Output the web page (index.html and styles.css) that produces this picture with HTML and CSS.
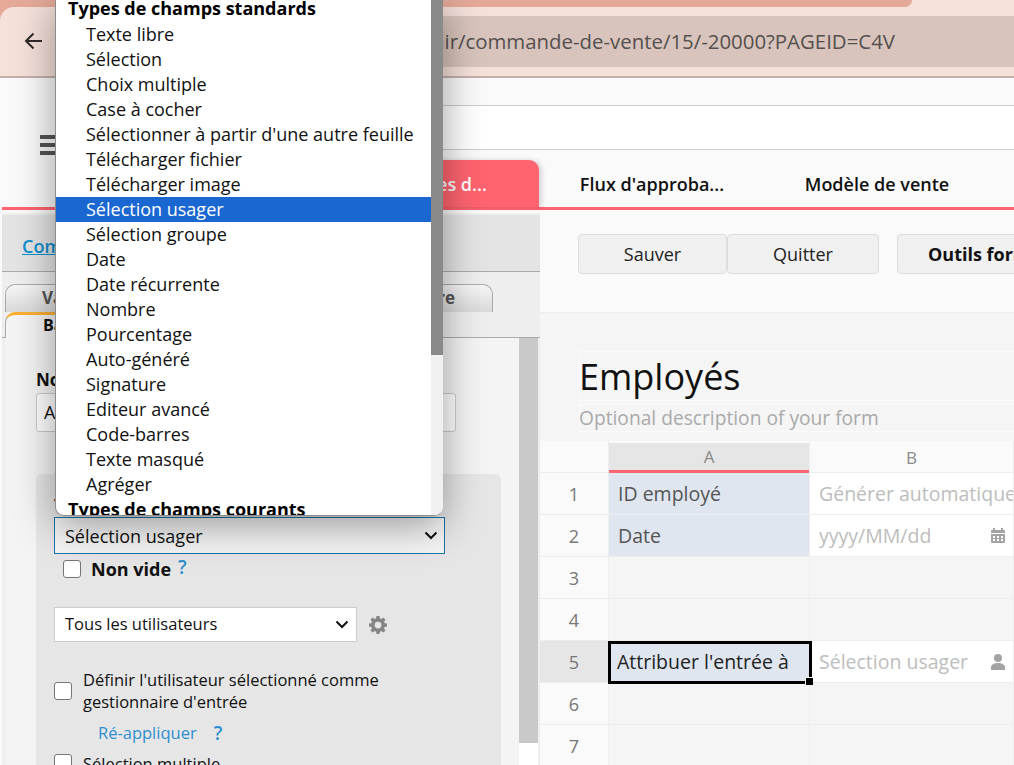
FILE: index.html
```html
<!DOCTYPE html>
<html lang="fr">
<head>
<meta charset="utf-8">
<title>Employés</title>
<link rel="stylesheet" href="styles.css">
</head>
<body>
<header class="chrome">
  <div class="strip"></div>
  <div class="toolbar">
    <svg class="back" width="18" height="18" viewBox="0 0 18 18"><path d="M18 9H2M9.500 1.500 2 9l7.500 7.500" fill="none" stroke="#2f2b2a" stroke-width="2"/></svg>
    <div class="url">nir/commande-de-vente/15/-20000?PAGEID=C4V</div>
  </div>
</header>

<div class="apphead">
  <div class="menu-cell"><div class="burger"><i></i><i></i><i></i></div></div>
  <div class="head-main">
    <div class="head-top"></div>
    <div class="head-white"></div>
    <nav class="tabs">
      <div class="tab active">Règles des d...</div>
      <div class="tab">Flux d'approba...</div>
      <div class="tab tab-last">Modèle de vente</div>
    </nav>
  </div>
</div>
<div class="redline"></div>

<main class="work">
  <aside class="panel">
    <div class="panel-head"><a class="crumb">Commande de vente</a></div>
    <div class="panel-tabs">
      <div class="ptab-row">
        <div class="ptab ptab-a">Valeur</div>
        <div class="ptab ptab-b">Structure</div>
      </div>
      <div class="ptab-on">Base</div>
    </div>
    <div class="panel-body">
      <div class="props">
        <label class="lbl">Nom</label>
        <div class="input">Attribuer l'entrée à</div>
        <section class="box">
          <div class="lbl">Type de champ</div>
          <div class="select sel-focus"><span>Sélection usager</span>
            <svg width="14" height="9" viewBox="0 0 14 9"><path d="M1.500 1.500 7 7l5.500-5.500" fill="none" stroke="#111" stroke-width="2"/></svg>
          </div>
          <div class="check-row nonvide">
            <span class="cb"></span><b>Non vide</b><span class="q">?</span>
          </div>
          <div class="sel-row">
            <div class="select sel-users"><span>Tous les utilisateurs</span>
              <svg width="14" height="9" viewBox="0 0 14 9"><path d="M1.500 1.500 7 7l5.500-5.500" fill="none" stroke="#111" stroke-width="2"/></svg>
            </div>
            <svg class="gear" width="18" height="18" viewBox="0 0 24 24"><path fill="#858585" d="M10 1h4l.6 3.200 1.900.8L19.200 3.100 22 6l-1.900 2.600.8 1.900 3.100.5v4l-3.100.6-.8 1.900 1.900 2.700L19.200 23l-2.700-1.900-1.900.8L14 25h-4l-.6-3.100-1.900-.8L4.800 23 2 20.300l1.900-2.700-.8-1.900L0 15v-4l3.100-.5.800-1.900L2 6l2.800-2.900L7.500 5l1.900-.8zM12 8.500a4.500 4.500 0 1 0 0 9 4.500 4.500 0 0 0 0-9z" transform="translate(0 -1)"/></svg>
          </div>
          <div class="check-row define">
            <span class="cb"></span>
            <span class="define-text">Définir l'utilisateur sélectionné comme gestionnaire d'entrée</span>
          </div>
          <div class="reapply"><a>Ré-appliquer</a><span class="q">?</span></div>
          <div class="check-row multi"><span class="cb"></span><span>Sélection multiple</span></div>
        </section>
      </div>
      <div class="scroll-col"><div class="scroll-bar"></div></div>
    </div>
  </aside>

  <section class="editor">
    <div class="actions">
      <button class="btn btn-save">Sauver</button>
      <button class="btn btn-quit">Quitter</button>
      <button class="btn btn-tools">Outils formulaire</button>
    </div>
    <div class="form-head">
      <div class="form-title">Employés</div>
      <div class="form-desc">Optional description of your form</div>
    </div>
    <div class="sheet">
      <div class="corner"></div><div class="col col-a">A</div><div class="col">B</div>

      <div class="num">1</div><div class="c lab">ID employé</div><div class="c val ph">Générer automatique</div>
      <div class="num">2</div><div class="c lab">Date</div>
      <div class="c val ph between">yyyy/MM/dd
        <svg width="14" height="15" viewBox="0 0 14 15"><path fill="#a3a3a3" d="M2 0h2v2h6V0h2v2h1a1 1 0 0 1 1 1v2H0V3a1 1 0 0 1 1-1h1zM0 6h14v8a1 1 0 0 1-1 1H1a1 1 0 0 1-1-1zm2 2v2h2V8zm4 0v2h2V8zm4 0v2h2V8zm-8 3v2h2v-2zm4 0v2h2v-2zm4 0v2h2v-2z"/></svg>
      </div>
      <div class="num">3</div><div class="c"></div><div class="c"></div>
      <div class="num">4</div><div class="c"></div><div class="c"></div>
      <div class="num num-on">5</div>
      <div class="c lab lab-on">Attribuer l'entrée à<span class="frame"></span><span class="handle"></span></div>
      <div class="c val ph between">Sélection usager
        <svg width="14" height="16" viewBox="0 0 14 16"><circle cx="7" cy="4" r="4" fill="#a3a3a3"/><path fill="#a3a3a3" d="M0 16v-2.500C0 10.500 3 9 7 9s7 1.500 7 4.500V16z"/></svg>
      </div>
      <div class="num">6</div><div class="c"></div><div class="c"></div>
      <div class="num">7</div><div class="c"></div><div class="c"></div>
    </div>
  </section>
</main>

<div class="popup">
  <div class="pop-list">
    <div class="grp grp-first">Types de champs standards</div>
    <div class="opt">Texte libre</div>
    <div class="opt">Sélection</div>
    <div class="opt">Choix multiple</div>
    <div class="opt">Case à cocher</div>
    <div class="opt">Sélectionner à partir d'une autre feuille</div>
    <div class="opt">Télécharger fichier</div>
    <div class="opt">Télécharger image</div>
    <div class="opt opt-on">Sélection usager</div>
    <div class="opt">Sélection groupe</div>
    <div class="opt">Date</div>
    <div class="opt">Date récurrente</div>
    <div class="opt">Nombre</div>
    <div class="opt">Pourcentage</div>
    <div class="opt">Auto-généré</div>
    <div class="opt">Signature</div>
    <div class="opt">Editeur avancé</div>
    <div class="opt">Code-barres</div>
    <div class="opt">Texte masqué</div>
    <div class="opt">Agréger</div>
    <div class="grp">Types de champs courants</div>
  </div>
  <div class="pop-track"><div class="pop-thumb"></div></div>
</div>
</body>
</html>
```
FILE: styles.css
```css
* { box-sizing: border-box; }
html, body { margin: 0; height: 765px; overflow: hidden; }
body { position: relative; background: #fafafa; font-family: "Open Sans", "Liberation Sans", sans-serif; color: #111; }

/* browser chrome */
.chrome { height: 78px; background: linear-gradient(to right, #e5a998 100px, #f5e0da 100px); border-bottom: 2px solid #c4b0aa; }
.strip { width: 912px; height: 7px; background: #e5a998; border-bottom-right-radius: 10px; }
.toolbar { height: 69px; background: #f5e0da; border-top-left-radius: 14px; display: flex; align-items: center; padding: 9px 0 9px 24px; gap: 18px; }
.back { flex: none; margin-top: -1px; }
.url { flex: 1; height: 51px; line-height: 51px; background: #d8c4bc; color: #55504e; font-size: 20.4px; padding-left: 372px; white-space: nowrap; overflow: hidden; }

/* app header */
.apphead { display: flex; height: 129px; background: #fafafa; }
.menu-cell { width: 60px; padding: 57px 0 0 40px; }
.burger { width: 20px; display: flex; flex-direction: column; gap: 4px; }
.burger i { display: block; height: 4px; background: #555; }
.head-main { flex: 1; display: flex; flex-direction: column; }
.head-top { height: 28px; border-bottom: 1px solid #ccc; }
.head-white { height: 44px; background: #fff; border-bottom: 1px solid #ccc; }
.tabs { flex: 1; display: flex; align-items: flex-end; padding-left: 253px; }
.tab { width: 226px; height: 47px; line-height: 49px; text-align: center; font-size: 18px; font-weight: 600; color: #111; }
.tab-last { padding-right: 2px; }
.tab.active { background: #ff6470; color: #fff; border-top-right-radius: 10px; border-top-left-radius: 10px; box-shadow: 3px 0 5px rgba(0,0,0,.15); }
.redline { height: 3px; margin-left: 2px; background: #ff6470; }

/* layout */
.work { display: flex; height: 555px; }
.panel { width: 540px; margin: 3px 0 0 0; padding-left: 2px; display: flex; flex-direction: column; }
.panel-head { height: 59px; padding: 2px 0 0; border-bottom: 1px solid #aaa; background: #f0f0f0; }
.crumb { display: block; height: 56px; background: #e4e4e4; padding: 19px 0 0 20px; color: #0b8fd0; font-size: 18px; font-weight: 600; text-decoration: underline; }
.panel-tabs { height: 65px; padding: 12px 0 0 3px; background: #eee; position: relative; }
.ptab-row { display: flex; width: 488px; height: 28px; }
.ptab { height: 28px; border: 1px solid #aaa; border-bottom: 0; background: linear-gradient(#f6f6f6, #d9d9d9); font-size: 17px; font-weight: 700; color: #555; line-height: 26px; }
.ptab-a { width: 244px; border-right: 0; border-top-left-radius: 10px; padding-left: 36px; }
.ptab-b { width: 244px; border-left: 0; border-top-right-radius: 10px; text-align: right; padding-right: 37px; }
.ptab-on { width: 100px; height: 26px; border-left: 1px solid #aaa; border-top: 3px solid #fbb034; border-top-left-radius: 10px; background: #f4f4f4; padding-left: 37px; font-size: 16px; font-weight: 700; line-height: 20px; }

.panel-body { flex: 1; display: flex; border-top: 1px solid #aaa; background: #eee; margin-left: 0; min-height: 0; }
.props { width: 514px; margin-left: 3px; background: #f4f4f4; padding: 31px 0 0 31px; overflow: hidden; }
.lbl { display: block; height: 22px; line-height: 22px; font-size: 17px; font-weight: 700; }
.input { width: 420px; height: 39px; margin-top: 2px; padding: 0 7px; line-height: 37px; background: #fff; border: 1px solid #ccc; border-radius: 3px; font-size: 18px; }
.box { width: 465px; height: 400px; margin-top: 42px; padding: 21px 18px 0; background: #e6e6e6; border-radius: 6px; font-size: 16.5px; }
.select { display: flex; align-items: center; justify-content: space-between; background: #fff; }
.sel-focus { width: 391px; height: 37px; padding: 0 6px 0 10px; border: 1px solid #1a75a8; font-size: 18px; background: #f6f6f6; }
.check-row { display: flex; align-items: center; }
.cb { flex: none; width: 18px; height: 18px; background: #fff; border: 1.5px solid #767676; border-radius: 3px; }
.nonvide { margin: 5px 0 0 9px; height: 20px; }
.nonvide b { margin-left: 10px; font-size: 18px; font-weight: 700; }
.q { color: #2d8fd0; font-size: 19px; font-weight: 600; line-height: 1; }
.nonvide .q { margin: -4px 0 0 7px; }
.sel-row { display: flex; align-items: center; margin-top: 28px; gap: 12px; }
.sel-users { width: 303px; height: 35px; padding: 0 7px 2px 10px; border: 1px solid #ccc; }
.sel-users svg { margin-top: 2px; }
.define { margin-top: 27px; gap: 11px; }
.define-text { width: 320px; line-height: 22px; }
.reapply { margin: 9px 0 0 44px; height: 22px; line-height: 22px; color: #2d8fd0; display: flex; align-items: center; gap: 17px; }
.multi { margin-top: 8px; gap: 11px; height: 22px; }

.scroll-col { width: 19px; height: 100%; background: #fff; }
.scroll-bar { height: 405px; background: #c9c9c9; }

/* editor */
.editor { flex: 1; min-width: 0; }
.actions { height: 103px; padding: 24px 0 0 38px; display: flex; align-items: flex-start; background: #fafafa; border-bottom: 1px solid #eee; overflow: hidden; }
.btn { flex: none; height: 40px; padding: 0; background: #f0f0f0; border: 1px solid #ddd; border-radius: 4px; font: inherit; font-size: 18px; color: #222; }
.btn-save { width: 149px; }
.btn-quit { width: 152px; }
.btn-tools { width: 217px; margin-left: 18px; font-weight: 700; color: #111; }
.form-head { height: 128px; padding: 38px 0 0 39px; background: #f5f5f5; }
.form-title { height: 50px; line-height: 50px; font-size: 36px; color: #111; border: 1px solid #fafafa; border-right: 0; text-indent: -1px; }
.form-desc { height: 28px; margin-top: 3px; line-height: 26px; font-size: 19.2px; color: #aaa; border: 1px solid #fafafa; border-right: 0; text-indent: -1px; }
.sheet { display: grid; grid-template-columns: 68px 200px 203px; grid-template-rows: 31px repeat(7, 41px); gap: 1px; width: 474px; background: #eee; }
.corner, .col { background: #fafafa; }
.col { text-align: center; font-size: 17px; color: #8a8a8a; line-height: 33px; }
.col-a { background: #e6e6e6; margin: 2px 0 -1px; border-bottom: 3px solid #ff6470; line-height: 27px; box-shadow: 0 -2px 0 #fafafa; }
.num { background: #fafafa; color: #777; font-size: 18px; text-align: center; line-height: 42px; }
.num-on { background: #e6e6e6; }
.c { background: #f5f5f5; font-size: 19.5px; line-height: 41px; white-space: nowrap; position: relative; overflow: visible; }
.lab { background: #e0e6ef; padding-left: 9px; color: #555; }
.lab-on { color: #222; padding-left: 8px; z-index: 2; }
.val { background: #fff; padding-left: 9px; overflow: hidden; }
.ph { color: #bdbdbd; }
.between { display: flex; align-items: center; justify-content: space-between; padding-right: 8px; }
.frame { position: absolute; left: -1px; right: -3px; top: 0; bottom: -2px; border: 3px solid #000; }
.handle { position: absolute; right: -4px; bottom: -3px; width: 7px; height: 7px; background: #000; box-shadow: -1px -1px 0 #fff; }

/* open dropdown */
.popup { position: absolute; left: 55px; top: -3px; width: 388px; height: 519px; display: flex; background: #fff; border-left: 1px solid #8c8c8c; border-bottom: 1px solid #8c8c8c; border-radius: 0 0 9px 9px; overflow: hidden; box-shadow: 0 10px 40px rgba(0,0,0,.38); }
.pop-list { flex: 1; min-width: 0; overflow: hidden; font-size: 18px; line-height: 25px; color: #111; }
.grp { height: 25px; padding-left: 12px; font-weight: 700; color: #000; }
.grp-first { line-height: 23px; }
.opt { height: 25px; padding-left: 30px; white-space: nowrap; }
.opt-on { background: #1a67d2; color: #fff; }
.pop-track { flex: none; width: 12px; background: #f0f0f0; }
.pop-thumb { height: 358px; background: #8a8a8a; }
```
